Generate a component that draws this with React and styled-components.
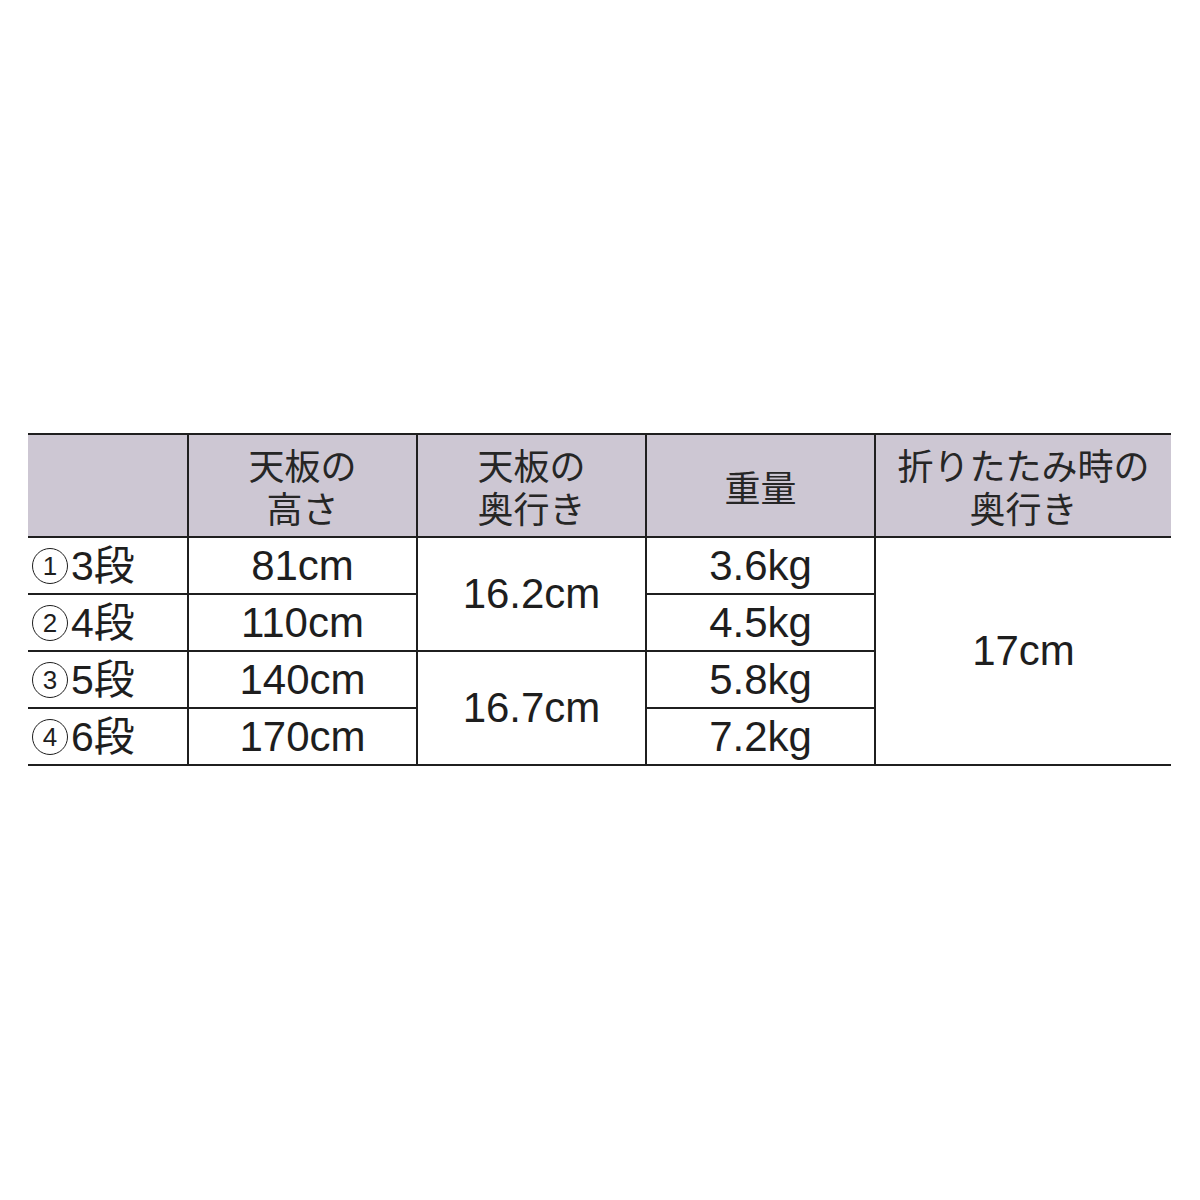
import React from 'react'
import styled, { createGlobalStyle } from 'styled-components'

const GlobalStyle = createGlobalStyle`
  body {
    margin: 0;
    background: #fff;
    font-family: 'Liberation Sans', 'Noto Sans CJK JP', sans-serif;
  }
`

const headers = [['天板の', '高さ'], ['天板の', '奥行き'], ['重量'], ['折りたたみ時の', '奥行き']]

const rows = [
  { num: '1', step: '3段', height: '81cm', weight: '3.6kg' },
  { num: '2', step: '4段', height: '110cm', weight: '4.5kg' },
  { num: '3', step: '5段', height: '140cm', weight: '5.8kg' },
  { num: '4', step: '6段', height: '170cm', weight: '7.2kg' },
]

export default function App() {
  return (
    <Page>
      <GlobalStyle />
      <Table>
        <colgroup>
          <col style={{ width: 160 }} />
          <col style={{ width: 229 }} />
          <col style={{ width: 229 }} />
          <col style={{ width: 229 }} />
          <col />
        </colgroup>
        <thead>
          <tr>
            <HeadCell />
            {headers.map((lines, index) => (
              <HeadCell key={index}>
                {lines.map((line, i) => (
                  <HeadLine key={i}>{line}</HeadLine>
                ))}
              </HeadCell>
            ))}
          </tr>
        </thead>
        <tbody>
          {rows.map(({ num, step, height, weight }, index) => (
            <Row key={index}>
              <LabelCell>
                <LabelWrap>
                  <Circled>{num}</Circled>
                  <span>{step}</span>
                </LabelWrap>
              </LabelCell>
              <Cell>{height}</Cell>
              {index % 2 === 0 && <Cell rowSpan={2}>{index === 0 ? '16.2cm' : '16.7cm'}</Cell>}
              <Cell>{weight}</Cell>
              {index === 0 && <Cell rowSpan={4}>17cm</Cell>}
            </Row>
          ))}
        </tbody>
      </Table>
    </Page>
  )
}

const Page = styled.div`
  width: 1200px;
  height: 1200px;
  box-sizing: border-box;
  padding: 433px 29px 0 28px;
`

const Table = styled.table`
  width: 100%;
  border-collapse: collapse;
  table-layout: fixed;
  color: #1e1e1e;
  border-top: 2px solid #1f1f1f;
  border-bottom: 2px solid #1f1f1f;
`

const HeadCell = styled.th`
  background: #cdc7d3;
  height: 98px;
  padding: 2px 0 1px;
  font-family: 'Noto Sans CJK JP', sans-serif;
  font-weight: 400;
  font-size: 36px;
  line-height: 43px;
  color: #262626;
  text-align: center;
  vertical-align: middle;
  border-bottom: 2px solid #1f1f1f;
  border-left: 2px solid #1f1f1f;

  &:first-child {
    border-left: none;
  }
`

const HeadLine = styled.div`
  white-space: nowrap;
`

const Row = styled.tr`
  height: 57px;
`

const Cell = styled.td`
  padding: 0;
  text-align: center;
  vertical-align: middle;
  font-size: 42px;
  line-height: 46px;
  border-left: 2px solid #1f1f1f;
  border-top: 2px solid #1f1f1f;
`

const LabelCell = styled(Cell)`
  text-align: left;
  padding-left: 4px;
  border-left: none;
  white-space: nowrap;
  font-size: 41px;
`

const LabelWrap = styled.div`
  display: flex;
  align-items: center;
  gap: 3px;
`

const Circled = styled.span`
  flex: none;
  box-sizing: border-box;
  display: flex;
  align-items: center;
  justify-content: center;
  width: 36px;
  height: 36px;
  border: 1.5px solid #1e1e1e;
  border-radius: 50%;
  font-size: 26px;
  line-height: 1;
  margin-top: 1px;
`
